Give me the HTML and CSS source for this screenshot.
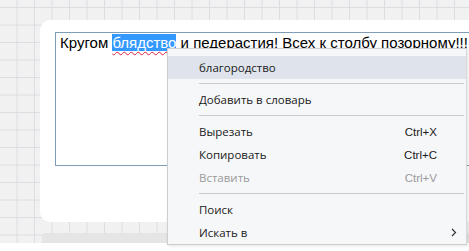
FILE: index.html
```html
<!DOCTYPE html>
<html lang="ru">
<head>
<meta charset="utf-8">
<link rel="stylesheet" href="styles.css">
</head>
<body>
<div class="page">
  <div class="card">
    <div class="editor"><span class="word">Кругом </span><span class="sel">блядство</span><span> и педерастия! Всех к столбу позорному!!!!</span></div>
  </div>
  <div class="next"></div>
</div>
<div class="menu">
  <div class="item active"><span>благородство</span></div>
  <div class="sep"></div>
  <div class="item"><span>Добавить в словарь</span></div>
  <div class="sep"></div>
  <div class="item"><span>Вырезать</span><span class="key">Ctrl+X</span></div>
  <div class="item"><span>Копировать</span><span class="key">Ctrl+C</span></div>
  <div class="item disabled"><span>Вставить</span><span class="key">Ctrl+V</span></div>
  <div class="sep"></div>
  <div class="item"><span>Поиск</span></div>
  <div class="item"><span>Искать в</span><span class="arrow"><svg width="6" height="9" viewBox="0 0 6 9"><path d="M1 1 L4.5 4.5 L1 8" fill="none" stroke="#333" stroke-width="1.2"/></svg></span></div>
</div>
</body>
</html>
```
FILE: styles.css
```css
html, body {
  margin: 0;
  padding: 0;
}
body {
  width: 469px;
  height: 251px;
  overflow: hidden;
  position: relative;
  background-color: #ffffff;
}
.page {
  height: 243px;
  background-color: #f1f1f2;
  background-image:
    linear-gradient(to right, transparent 16.5px, #dcdde2 16.5px, #dcdde2 17.5px, transparent 17.5px),
    linear-gradient(to bottom, transparent 16.5px, #dcdde2 16.5px, #dcdde2 17.5px, transparent 17.5px);
  background-size: 17.5px 17.5px, 17.5px 17.5px;
  background-position: 0 0, 0 -9.5px;
  padding-top: 20px;
  padding-left: 40px;
  box-sizing: border-box;
  overflow: hidden;
}
.card {
  background: #ffffff;
  border-radius: 10px 0 0 10px;
  height: 202px;
  padding: 12px 0 0 15px;
  box-sizing: border-box;
}
.editor {
  height: 134px;
  border: 1px solid #7f9db9;
  border-right: none;
  box-sizing: border-box;
  padding: 1px 0 0 4px;
  font-family: "Liberation Sans", Arial, sans-serif;
  font-size: 15px;
  line-height: 18px;
  color: #000;
  white-space: nowrap;
  overflow: hidden;
}
.sel {
  background: #3399ff;
  color: #fff;
  text-decoration: underline wavy #e0203c;
  text-decoration-thickness: 1px;
  text-underline-offset: 3px;
}
.next {
  margin-top: 11px;
  height: 10px;
  background: #e5e5e5;
  border-radius: 4px 0 0 0;
  margin-left: 2px;
}
.menu {
  position: absolute;
  left: 167px;
  top: 48px;
  width: 300px;
  box-sizing: border-box;
  background: #f6f7f8;
  border: 1px solid #cfcfcf;
  border-right-color: #d8d8d8;
  padding-top: 7px;
  font-family: "Open Sans", "Noto Sans", sans-serif;
  font-size: 11.5px;
  color: #1a1a1a;
  box-shadow: 1px 1px 3px rgba(0,0,0,0.12);
}
.item {
  height: 23px;
  display: flex;
  align-items: center;
  justify-content: space-between;
  padding: 0 29px 0 31px;
}
.item.active {
  background: #dfe4ec;
}
.item.disabled {
  color: #9a9a9a;
}
.key {
  font-family: "Liberation Sans", Arial, sans-serif;
  font-size: 11.5px;
}
.arrow {
  margin-right: -20px;
  display: flex;
}
.sep {
  height: 1px;
  background: #cacaca;
  margin: 4px 2px 4px 31px;
}
```
